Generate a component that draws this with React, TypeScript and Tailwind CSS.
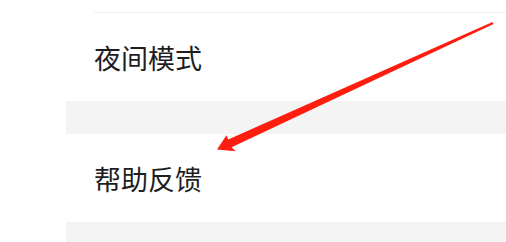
import React from "react";

export default function App() {
  return (
    <div
      className="relative w-[506px] h-[242px] overflow-hidden bg-white flex"
      style={{ fontFamily: '"Noto Sans CJK SC", "Noto Sans", sans-serif' }}
    >
      <div className="w-[66px] shrink-0 bg-white" />
      <div className="flex-1 flex flex-col">
        <div className="h-[12px] bg-white" />
        <div className="bg-white pl-[28px]">
          <div className="h-[89px] border-t border-[#efefef] flex items-center text-[27px] text-[#1e1e1e] leading-none">
            夜间模式
          </div>
        </div>
        <div className="h-[33px] bg-[#f4f4f4]" />
        <div className="bg-white pl-[28px]">
          <div className="h-[88px] flex items-center text-[27px] text-[#1e1e1e] leading-none">
            帮助反馈
          </div>
        </div>
        <div className="flex-1 bg-[#f4f4f4]" />
      </div>
      <svg
        className="absolute left-0 top-0 pointer-events-none"
        width="506"
        height="242"
        viewBox="0 0 506 242"
      >
        <polygon
          points="217,149.5 226.5,135.2 228.2,139.6 492.5,22.1 493.5,23.9 231.6,147.2 235.5,151.2"
          fill="#ff1d10"
        />
      </svg>
    </div>
  );
}
